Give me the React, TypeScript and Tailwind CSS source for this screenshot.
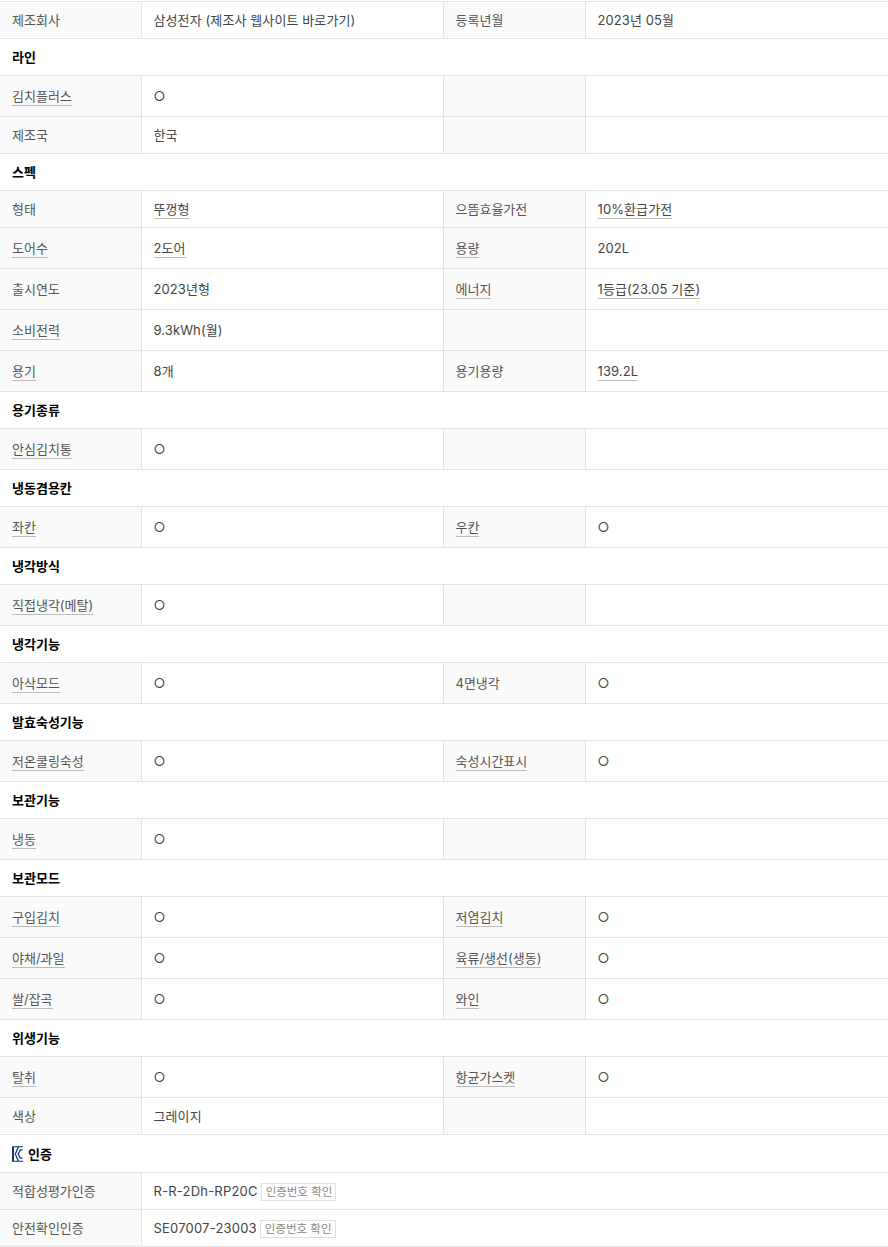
type Cell = { text: string; link?: boolean }
type Row =
  | { section: string; kc?: boolean }
  | { cells: [Cell, Cell, Cell?, Cell?]; badge?: boolean }

const l = (text: string): Cell => ({ text, link: true })
const t = (text: string): Cell => ({ text })
const o = t("○")

const rows: Row[] = [
  { cells: [t("제조회사"), t("삼성전자 (제조사 웹사이트 바로가기)"), t("등록년월"), t("2023년 05월")] },
  { section: "라인" },
  { cells: [l("김치플러스"), o] },
  { cells: [t("제조국"), t("한국")] },
  { section: "스펙" },
  { cells: [t("형태"), l("뚜껑형"), t("으뜸효율가전"), l("10%환급가전")] },
  { cells: [l("도어수"), l("2도어"), l("용량"), t("202L")] },
  { cells: [t("출시연도"), t("2023년형"), l("에너지"), l("1등급(23.05 기준)")] },
  { cells: [l("소비전력"), t("9.3kWh(월)")] },
  { cells: [l("용기"), t("8개"), t("용기용량"), l("139.2L")] },
  { section: "용기종류" },
  { cells: [l("안심김치통"), o] },
  { section: "냉동겸용칸" },
  { cells: [l("좌칸"), o, l("우칸"), o] },
  { section: "냉각방식" },
  { cells: [l("직접냉각(메탈)"), o] },
  { section: "냉각기능" },
  { cells: [l("아삭모드"), o, t("4면냉각"), o] },
  { section: "발효숙성기능" },
  { cells: [l("저온쿨링숙성"), o, l("숙성시간표시"), o] },
  { section: "보관기능" },
  { cells: [l("냉동"), o] },
  { section: "보관모드" },
  { cells: [l("구입김치"), o, l("저염김치"), o] },
  { cells: [l("야채/과일"), o, l("육류/생선(생동)"), o] },
  { cells: [l("쌀/잡곡"), o, l("와인"), o] },
  { section: "위생기능" },
  { cells: [l("탈취"), o, l("항균가스켓"), o] },
  { cells: [t("색상"), t("그레이지")] },
  { section: "인증", kc: true },
  { cells: [t("적합성평가인증"), t("R-R-2Dh-RP20C")], badge: true },
  { cells: [t("안전확인인증"), t("SE07007-23003")], badge: true },
]

function KcLogo() {
  return (
    <svg width="11" height="16" viewBox="0 0 12 17" className="shrink-0" fill="none" stroke="#12356f">
      <path d="M1.1 0v17" strokeWidth="2.2" />
      <path d="M2 .6h10M2 16.4h10" strokeWidth="1.2" />
      <path d="M7 .6 3.6 8.5 7 16.4" strokeWidth="1.4" />
      <path d="M11.6 4H9L6.8 8.5 9 13h2.6" strokeWidth="1.4" />
    </svg>
  )
}

function Label({ cell }: { cell?: Cell }) {
  return (
    <th
      className={`border border-[#e3e3e3] bg-[#fafafa] px-3 pt-[9px] text-left font-normal text-[#555] first:border-l-0 ${
        cell?.link ? "pb-[10px]" : "pb-[9px]"
      }`}
    >
      {cell?.link ? (
        <span className="inline-block border-b border-[#bbb] pt-[2px]">{cell.text}</span>
      ) : (
        cell?.text
      )}
    </th>
  )
}

function Value({ cell, badge }: { cell?: Cell; badge?: boolean }) {
  return (
    <td
      colSpan={badge ? 3 : 1}
      className={`border border-[#e3e3e3] px-3 py-[9px] text-[#444] last:border-r-0 ${
        badge ? "tracking-[0.2px]" : "tracking-[0.1px]"
      }`}
    >
      {cell?.link ? <span className="border-b border-[#bbb] pb-[1px]">{cell.text}</span> : cell?.text}
      {badge && (
        <span className="ml-[3px] border border-[#e0e0e0] py-[1px] pr-[3px] pl-1 text-[11.5px] leading-[14px] tracking-normal text-[#888]">
          인증번호 확인
        </span>
      )}
    </td>
  )
}

export default function App() {
  return (
    <div className="bg-white pt-px font-['Inter','Noto_Sans_CJK_KR',sans-serif] text-[13px] leading-[18px]">
      <table className="w-[888px] table-fixed border-collapse">
        <colgroup>
          <col className="w-[141px]" />
          <col className="w-[302px]" />
          <col className="w-[142px]" />
          <col className="w-[303px]" />
        </colgroup>
        <tbody>
          {rows.map((row, i) =>
            "section" in row ? (
              <tr key={i}>
                <th colSpan={4} className="border-y border-[#e3e3e3] px-3 py-[9px] text-left font-bold text-black">
                  {row.kc ? (
                    <span className="flex h-[19px] items-center gap-[5px]">
                      <KcLogo />
                      {row.section}
                    </span>
                  ) : (
                    row.section
                  )}
                </th>
              </tr>
            ) : (
              <tr key={i}>
                <Label cell={row.cells[0]} />
                <Value cell={row.cells[1]} badge={row.badge} />
                {!row.badge && <Label cell={row.cells[2]} />}
                {!row.badge && <Value cell={row.cells[3]} />}
              </tr>
            ),
          )}
        </tbody>
      </table>
    </div>
  )
}
